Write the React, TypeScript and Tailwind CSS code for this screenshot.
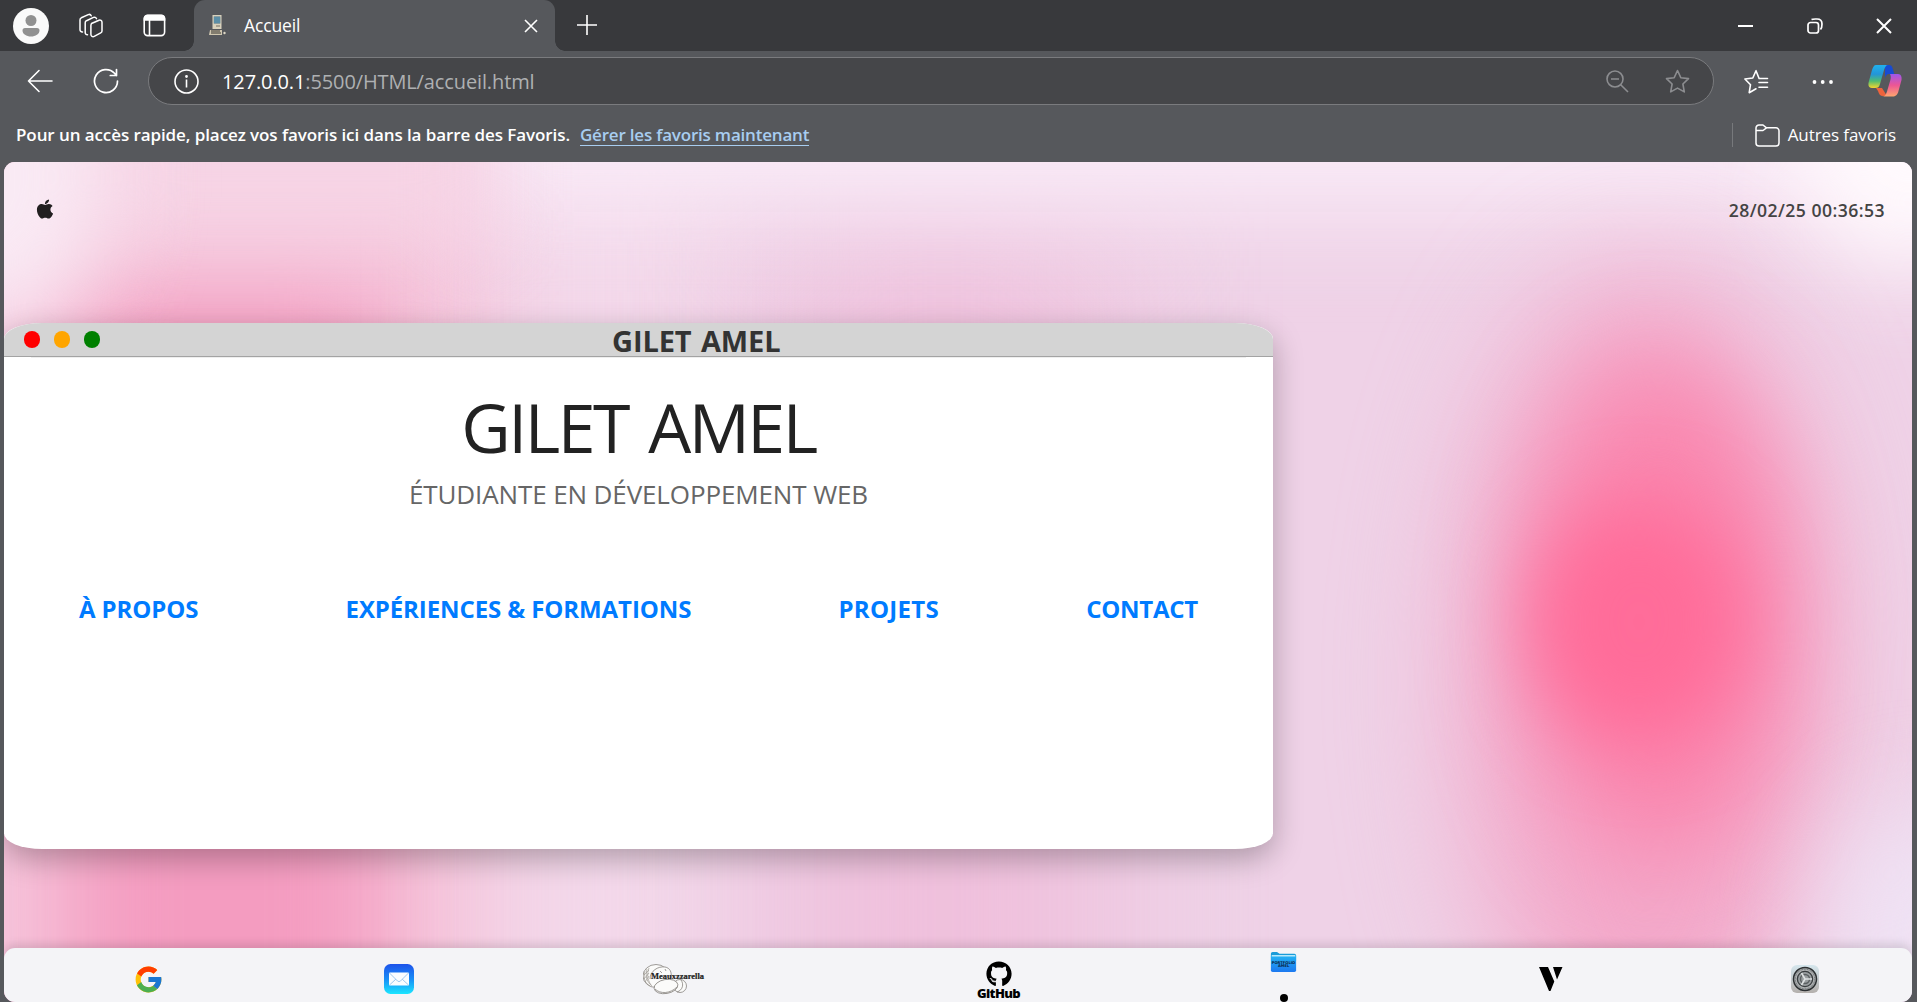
import React from "react";
import { FaApple, FaGithub } from "react-icons/fa";
import { FcGoogle } from "react-icons/fc";

function TabBar() {
  return (
    <div className="flex h-[51px] shrink-0 items-center bg-[#38393c] text-white">
      <div className="ml-[13px] flex size-9 items-center justify-center rounded-full bg-[#fafafa]">
        <svg width="18" height="22" viewBox="0 0 18 22" fill="#919191">
          <circle cx="9" cy="5.5" r="5.5" />
          <path d="M3 13h12a2.5 2.5 0 0 1 2.5 2.5C17.500 19 13.500 21.500 9 21.500S.5 19 .5 15.500A2.500 2.500 0 0 1 3 13Z" />
        </svg>
      </div>
      <svg className="ml-[29px]" width="26" height="26" viewBox="0 0 26 26" fill="none" stroke="white" strokeWidth="1.500" strokeLinejoin="round" strokeLinecap="round">
        <path d="M13.500 10.500 21 7.200a2.200 2.200 0 0 1 3 2v8.700c0 .9-.5 1.600-1.300 2l-6.500 3.500a2.200 2.200 0 0 1-3.300-2V12.500c0-.9.200-1.600 1.100-2.100Z" />
        <path d="M9.500 21.800a2.200 2.200 0 0 1-2.300-2.200V9.800c0-1 .5-1.700 1.300-2.100l7-3.300c1.300-.6 2.500 0 3 1.200" />
        <path d="M4.500 18.900A2.200 2.200 0 0 1 2 16.700V6.900c0-1 .5-1.700 1.300-2.100l7-3.200c1.300-.5 2.400 0 2.900 1.200" />
      </svg>
      <svg className="ml-[39px]" width="23" height="23" viewBox="0 0 23 23" fill="none" stroke="white" strokeWidth="1.600">
        <rect x="1.200" y="1.200" width="20.400" height="20.400" rx="3.500" />
        <path d="M1.500 6V4.500a3 3 0 0 1 3-3h14a3 3 0 0 1 3 3V6Z" fill="white" />
        <path d="M6.500 6v15.500" />
      </svg>
      <div className="relative ml-[28px] flex h-full w-[361px] items-center rounded-t-[11px] bg-[#56585c]">
        <div className="absolute bottom-0 left-[-10px] size-[10px] bg-[radial-gradient(circle_at_0_0,#38393c_9.500px,#56585c_10px)]" />
        <div className="absolute right-[-10px] bottom-0 size-[10px] bg-[radial-gradient(circle_at_100%_0,#38393c_9.500px,#56585c_10px)]" />
        <svg className="ml-[15px]" width="17" height="21" viewBox="0 0 17 21">
          <rect x="3.500" y="0" width="9" height="14" fill="#d9d2bd" />
          <rect x="4.800" y="1.500" width="6.500" height="7" fill="#416b84" />
          <path d="M5 3h6M5 5h6M5 7h6" stroke="#83c4dd" strokeWidth=".8" />
          <path d="M7 11h4" stroke="#756f62" />
          <path d="M1 15h12v5H0z" fill="#cfc6af" />
          <path d="M2 16h9M2 18h10" stroke="#34332f" />
          <circle cx="15.500" cy="18" r="1.200" fill="#ded7c5" />
        </svg>
        <span className="ml-[18px] text-[17.500px] tracking-[-0.150px]">Accueil</span>
        <svg className="mr-[17px] ml-auto" width="14" height="14" viewBox="0 0 14 14" stroke="white" strokeWidth="1.600"><path d="m1 1 12 12M13 1 1 13" /></svg>
      </div>
      <svg className="mb-[1px] ml-[21px]" width="22" height="22" viewBox="0 0 22 22" stroke="white" strokeWidth="1.600"><path d="M11 1v20M1 11h20" /></svg>
      <svg className="ml-auto" width="16" height="16" viewBox="0 0 16 16" stroke="white" strokeWidth="2"><path d="M0 8h15" /></svg>
      <svg className="ml-[53px]" width="16" height="16" viewBox="0 0 16 16" fill="none" stroke="white" strokeWidth="1.700">
        <rect x="1" y="4.500" width="10.500" height="10.500" rx="2.500" />
        <path d="M4.500 1.500C6 .8 8 1 10 1c3 0 5 2 5 5 0 2.500 0 4-1.500 5.500" />
      </svg>
      <svg className="mr-[25px] ml-[53px]" width="16" height="16" viewBox="0 0 16 16" stroke="white" strokeWidth="2"><path d="m1 1 14 14M15 1 1 15" /></svg>
    </div>
  );
}

function Toolbar() {
  return (
    <div className="flex h-[61px] shrink-0 items-center text-white">
      <svg className="mb-px ml-[27px]" width="26" height="24" viewBox="0 0 26 24" fill="none" stroke="white" strokeWidth="1.600" strokeLinecap="round" strokeLinejoin="round"><path d="M12 1.500 1.500 12 12 22.500M1.500 12H25" /></svg>
      <svg className="mb-px ml-[40px]" width="26" height="26" viewBox="0 0 26 26" fill="none" stroke="white" strokeWidth="1.700" strokeLinecap="round" strokeLinejoin="round"><path d="M24.500 13A11.500 11.500 0 1 1 21.500 5.300L23.500 7.500M23.500 1.500v6h-6.200" /></svg>
      <div className="mb-px ml-[29px] flex h-[48px] w-[1566px] items-center rounded-full border border-[#7a7b7e] bg-[#454649]">
        <svg className="ml-[25px]" width="25" height="25" viewBox="0 0 25 25" fill="none" stroke="white" strokeWidth="1.600"><circle cx="12.500" cy="12.500" r="11.500" /><path d="M12.500 10.500v8" /><circle cx="12.500" cy="7.500" r=".6" fill="white" /></svg>
        <span className="mt-[2px] ml-[23px] text-[20px] tracking-[-0.120px] text-[#aeb0b2]"><span className="text-white">127.0.0.1</span>:5500/HTML/accueil.html</span>
        <svg className="ml-auto" width="23" height="23" viewBox="0 0 23 23" fill="none" stroke="#8c8d90" strokeWidth="1.600"><circle cx="9" cy="9" r="8" /><path d="M5 9h8M14.700 14.700l7.300 7.300" /></svg>
        <svg className="mr-[23px] ml-[36px]" width="25" height="25" viewBox="0 0 25 25" fill="none" stroke="#8c8d90" strokeWidth="1.600" strokeLinejoin="round"><path d="m12.500 1.500 3.300 7.200 7.700.9-5.600 5.400 1.400 7.900-6.800-3.800-6.800 3.800L7.100 15 1.500 9.600l7.700-.9Z" /></svg>
      </div>
      <svg className="ml-[29px]" width="26" height="26" viewBox="0 0 26 26" fill="none" stroke="white" strokeWidth="1.600" strokeLinejoin="round" strokeLinecap="round"><path d="M24.500 9.500h-8.400L13 1.700 9.800 9l-7.900 1 5.600 5.700-1.300 8 6.800-3.900M16 13.500h8.500M16 18.200h8.500" /></svg>
      <svg className="ml-[43px]" width="22" height="6" viewBox="0 0 22 6" fill="white"><circle cx="2.500" cy="3" r="1.900" /><circle cx="10.700" cy="3" r="1.900" /><circle cx="19" cy="3" r="1.900" /></svg>
      <svg className="mb-[2px] ml-[34px]" width="34" height="32" viewBox="0 0 34 32">
        <defs>
          <linearGradient id="copilotA" x1="0" y1="0" x2="0" y2="1"><stop offset="0" stopColor="#20b1ed" /><stop offset=".4" stopColor="#2395d8" /><stop offset=".7" stopColor="#51bc70" /><stop offset="1" stopColor="#f4d62d" /></linearGradient>
          <linearGradient id="copilotB" x1="0" y1="0" x2="0" y2="1"><stop offset="0" stopColor="#9d57ec" /><stop offset=".5" stopColor="#ed5694" /><stop offset="1" stopColor="#ffa66f" /></linearGradient>
        </defs>
        <path d="M17 0h4c2 0 3 1 3.500 3l1.800 6H21c-2 0-3 1-4 4Z" fill="#174bd2" />
        <path d="M8 23h6l5 8h-4c-3 0-4-2-5-5Z" fill="#ed633c" />
        <path d="M8 0h12c-2 0-3 2-4 5l-4 14c-1 3-2 4-5 4H4c-4 0-4-4-3-7L4 5c1-3 2-5 4-5Z" fill="url(#copilotA)" />
        <path d="M22 9h8c3 0 4 3 3.500 6l-3 11c-1 4-3 5.500-6 5.500H14c3 0 4-2 5-5l3.500-12c.5-2 .3-4-.5-5.500Z" fill="url(#copilotB)" />
      </svg>
    </div>
  );
}

function FavoritesBar() {
  return (
    <div className="flex h-[50px] shrink-0 items-center pb-[4px] text-[17px] text-white">
      <span className="ml-[16px] font-semibold tracking-[-0.085px]">Pour un accès rapide, placez vos favoris ici dans la barre des Favoris.</span>
      <span className="ml-[10px] border-b border-[#a8cdf0] font-semibold leading-[20px] tracking-[-0.200px] text-[#a8cdf0]">Gérer les favoris maintenant</span>
      <div className="ml-auto h-[24px] w-px bg-[#77797c]" />
      <svg className="ml-[22px]" width="25" height="23" viewBox="0 0 25 23" fill="none" stroke="white" strokeWidth="1.500" strokeLinejoin="round"><path d="M1 6V4a3 3 0 0 1 3-3h4l3.500 2.800H21A3 3 0 0 1 24 6.800V19a3 3 0 0 1-3 3H4a3 3 0 0 1-3-3ZM1 6.500h7l3.500-2.700" /></svg>
      <span className="mr-[21px] ml-[8px] tracking-[-0.080px]">Autres favoris</span>
    </div>
  );
}

function ProfileWindow() {
  return (
    <section className="mt-[161px] h-[526px] w-[1269px] rounded-[3%] bg-white shadow-[0_10px_30px_rgba(0,0,0,0.28)]">
      <header className="flex h-[34px] items-center border-b border-[#a3a3a3] bg-[#d4d4d4] [border-radius:38px_38px_0_0/16px_16px_0_0]">
        <div className="ml-[20px] flex gap-[14px]">
          <span className="h-[17px] w-4 rounded-full bg-[red]" />
          <span className="h-[17px] w-4 rounded-full bg-[orange]" />
          <span className="h-[17px] w-4 rounded-full bg-[green]" />
        </div>
        <span className="mt-[2px] ml-[512px] text-[29px] leading-[33px] font-bold tracking-[-0.100px] text-[#333] [word-spacing:2px]">GILET AMEL</span>
      </header>
      <div className="mx-[27px] h-px bg-[#eee]" />
      <div className="flex flex-col items-center text-center">
        <h1 className="mt-[28px] text-[68px] leading-[82px] tracking-[-2.500px] text-[#222] [word-spacing:5px]">GILET AMEL</h1>
        <p className="mt-[8px] text-[26px] leading-[36px] tracking-[-0.120px] text-[#666]">ÉTUDIANTE EN DÉVELOPPEMENT WEB</p>
      </div>
      <nav className="mt-[81px] flex justify-between px-[75px] text-[24px] leading-[32px] font-bold tracking-[-0.100px] text-[#007bff]">
        <a>À PROPOS</a>
        <a>EXPÉRIENCES &amp; FORMATIONS</a>
        <a className="tracking-[0.300px]">PROJETS</a>
        <a className="tracking-[-0.250px]">CONTACT</a>
      </nav>
    </section>
  );
}

function MailIcon() {
  return (
    <svg width="30" height="30" viewBox="0 0 30 30">
      <defs><linearGradient id="mailBg" x1="0" y1="0" x2="0" y2="1"><stop offset="0" stopColor="#1d52ea" /><stop offset=".5" stopColor="#188df6" /><stop offset="1" stopColor="#1be6ff" /></linearGradient></defs>
      <rect width="30" height="30" rx="6.500" fill="url(#mailBg)" />
      <rect x="5" y="8.500" width="20" height="13" rx="1" fill="#fafdff" />
      <path d="m5.500 9 8 8q1.500 1.300 3 0l8-8M5.500 21l6.500-6M24.500 21 18 15" fill="none" stroke="#9fc9ee" strokeWidth="1" />
    </svg>
  );
}

function CheeseIcon() {
  return (
    <svg width="62" height="31" viewBox="0 0 62 31" fill="#fbfbfa" stroke="#77736e" strokeWidth=".7">
      <ellipse cx="13" cy="12" rx="13" ry="11.500" />
      <path d="M2 7c-2 8 0 12 5 15M4 5c-2 8 0 13 5 17M6 4c-2 6-2 11 2 17M1 11l5-5M1 15l5-6M2 18l4-6" fill="none" stroke="#9d9993" />
      <path d="M7 15C7 7 15 2 22 3c5 1 7 5 6 11" />
      <ellipse cx="37" cy="22" rx="6.500" ry="6.500" />
      <path d="M34 28c6-2 7-8 4-12" fill="none" />
      <ellipse cx="23" cy="22.500" rx="12" ry="7" transform="rotate(-10 23 22.500)" />
      <path d="M12 25c5 5 15 5 22-2M17 7l2 2M22 5l1 2" fill="none" />
      <text x="8" y="15" fill="#1d1c1b" stroke="#1d1c1b" strokeWidth=".2" fontFamily="Liberation Serif" fontWeight="bold" fontSize="8" textLength="53" lengthAdjust="spacingAndGlyphs">Meauxzzarella</text>
    </svg>
  );
}

function FolderIcon() {
  return (
    <svg width="29" height="23" viewBox="0 0 29 23">
      <defs><linearGradient id="folderBg" x1="0" y1="0" x2="0" y2="1"><stop offset="0" stopColor="#23b3f3" /><stop offset="1" stopColor="#1c78f0" /></linearGradient></defs>
      <path d="M0 2Q0 0 2 0h5l3 2h17q2 0 2 2v6H0Z" fill="#199bd8" />
      <path d="M0 4h29v17q0 2-2 2H2q-2 0-2-2Z" fill="url(#folderBg)" />
      <path d="M1 3.500h27v1.700H1Z" fill="#b5e8fb" />
      <g fill="#09233e" fontFamily="DejaVu Sans" fontWeight="bold" fontSize="4.300">
        <text x="1" y="13.300" textLength="27" lengthAdjust="spacingAndGlyphs">PORTFOLIO</text>
        <text x="8.200" y="17.600" textLength="13" lengthAdjust="spacingAndGlyphs">AMEL</text>
      </g>
    </svg>
  );
}

function SettingsIcon() {
  return (
    <svg width="28" height="28" viewBox="0 0 28 28" fill="none">
      <defs><linearGradient id="settingsBg" x1="0" y1="0" x2="0" y2="1"><stop offset="0" stopColor="#d5e6ed" /><stop offset="1" stopColor="#b4b0ad" /></linearGradient></defs>
      <rect width="28" height="28" rx="6" fill="url(#settingsBg)" />
      <circle cx="14" cy="14" r="11.500" fill="#aeb1b2" stroke="#2c3032" strokeWidth="1.500" />
      <circle cx="14" cy="14" r="9.800" stroke="#596063" strokeDasharray=".8 .8" />
      <circle cx="14" cy="14" r="7.600" fill="#999ea0" stroke="#383d3f" strokeWidth="1.300" />
      <circle cx="14" cy="14" r="4.500" stroke="#5b6062" strokeWidth="1.500" />
      <path d="M14 14h7M14 14l-3.500-6M14 14l-3.500 6" stroke="#dce0e1" strokeWidth="1.600" />
    </svg>
  );
}

function Dock() {
  return (
    <footer className="mt-auto flex h-[54px] items-center overflow-hidden rounded-[11px] bg-[#f4f4f7] shadow-[0_-4px_10px_rgba(0,0,0,0.12)]">
      <FcGoogle className="mt-[8px] ml-[129px]" size={31} />
      <span className="ml-[220px] pt-[8px]"><MailIcon /></span>
      <span className="ml-[229px] pt-[8px]"><CheeseIcon /></span>
      <div className="ml-[273px] flex w-[41px] flex-col items-center pt-[10px] text-black">
        <FaGithub size={26} />
        <span className="text-[13px] leading-[13px] font-extrabold tracking-[-0.600px]">GitHub</span>
      </div>
      <div className="ml-[250px] flex h-full flex-col items-center pt-[4px]">
        <FolderIcon />
        <span className="mt-[22px] size-2 shrink-0 rounded-full bg-black" />
      </div>
      <svg className="mt-[8px] ml-[241px]" width="24" height="24" viewBox="0 0 24 24"><path d="M0 0h9l6.300 14.500L11.500 24H10ZM14 0h9.500L18 12.500Z" /></svg>
      <span className="ml-[228px] pt-[8px]"><SettingsIcon /></span>
    </footer>
  );
}

function Desktop() {
  return (
    <main className="relative isolate mx-1 mr-[5px] flex h-[840px] flex-col overflow-hidden rounded-[11px] bg-[#efd2e7]">
      <div className="absolute inset-0 -z-10">
        <div className="absolute top-[-80px] left-[-80px] h-[1000px] w-[620px] bg-[#f6c6dc] blur-[60px]" />
        <div className="absolute top-[130px] left-[60px] h-[800px] w-[320px] bg-[#f49cc0] blur-[50px]" />
        <div className="absolute top-[-50px] left-[500px] h-[1000px] w-[220px] bg-[#f3d8ea] blur-[60px]" />
        <div className="absolute top-[80px] left-[780px] h-[900px] w-[320px] bg-[#efc0dc] blur-[75px]" />
        <div className="absolute top-[-140px] left-[450px] h-[190px] w-[1560px] bg-[#f9ebf7] blur-[50px]" />
        <div className="absolute top-[-100px] left-[100px] h-[180px] w-[380px] bg-[#f6d4e5] blur-[40px]" />
        <div className="absolute top-[-140px] left-[-160px] h-[310px] w-[270px] rounded-full bg-[#f9eaf4] blur-[45px]" />
        <div className="absolute top-[110px] left-[1460px] h-[820px] w-[360px] rounded-[50%] bg-[#f3a9ca] blur-[60px]" />
        <div className="absolute top-[200px] left-[1525px] h-[500px] w-[260px] rounded-[50%] bg-[#fa86ae] blur-[50px]" />
        <div className="absolute top-[340px] left-[1530px] h-[240px] w-[210px] rounded-[50%] bg-[#ff6c99] blur-[38px]" />
        <div className="absolute top-[-120px] left-[1790px] h-[230px] w-[230px] rounded-full bg-[#fffafd] blur-[50px]" />
        <div className="absolute top-[640px] left-[1820px] h-[300px] w-[220px] rounded-full bg-[#efe2f4] blur-[50px]" />
      </div>
      <div className="absolute top-[35px] right-[27px] left-[30px] flex items-center justify-between">
        <FaApple size={22} className="mb-[2px] text-[#221f20]" />
        <time className="text-[17.600px] leading-[26px] font-semibold tracking-[0.450px] text-[#444]">28/02/25 00:36:53</time>
      </div>
      <ProfileWindow />
      <Dock />
    </main>
  );
}

export default function App() {
  return (
    <div className="flex h-[1002px] w-[1917px] flex-col overflow-hidden bg-[#56585c] font-['Open_Sans',sans-serif]">
      <TabBar />
      <Toolbar />
      <FavoritesBar />
      <Desktop />
    </div>
  );
}
